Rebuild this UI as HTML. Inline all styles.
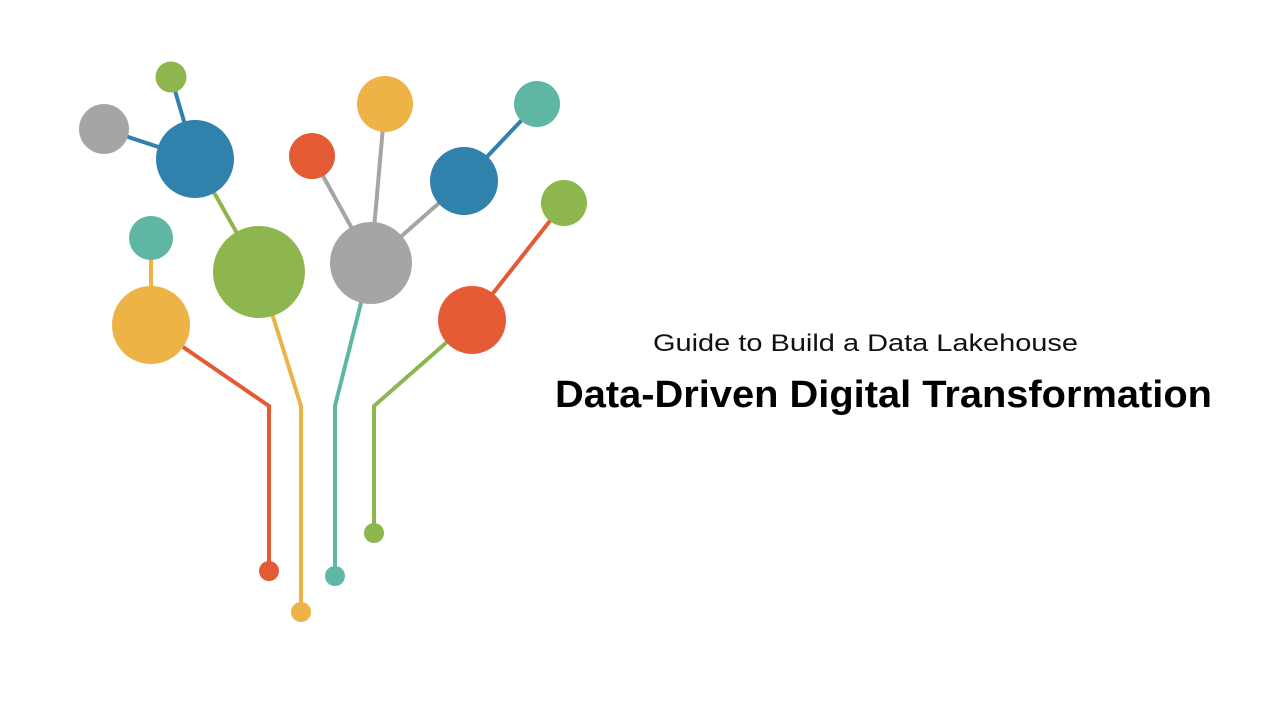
<!DOCTYPE html>
<html><head><meta charset="utf-8"><style>
html,body{margin:0;padding:0;background:#fff;}
svg{display:block;}
</style></head><body>
<svg width="1280" height="720" viewBox="0 0 1280 720" xmlns="http://www.w3.org/2000/svg">
<g fill="none" stroke-width="4" stroke-linejoin="miter">
<line x1="171" y1="77" x2="195" y2="159" stroke="#3181AD"/>
<line x1="104" y1="129" x2="195" y2="159" stroke="#3181AD"/>
<line x1="195" y1="159" x2="259" y2="272" stroke="#8DB74E"/>
<line x1="151" y1="238" x2="151" y2="325" stroke="#EDB347"/>
<polyline points="151,325 269,406 269,571" stroke="#E35A35"/>
<polyline points="259,272 301,406 301,612" stroke="#EDB347"/>
<line x1="312" y1="156" x2="371" y2="263" stroke="#A5A5A5"/>
<line x1="385" y1="104" x2="371" y2="263" stroke="#A5A5A5"/>
<line x1="464" y1="181" x2="371" y2="263" stroke="#A5A5A5"/>
<polyline points="371,263 335,406 335,576" stroke="#5FB7A3"/>
<line x1="464" y1="181" x2="537" y2="104" stroke="#3181AD"/>
<line x1="564" y1="203" x2="472" y2="320" stroke="#E35A35"/>
<polyline points="472,320 374,406 374,533" stroke="#8DB74E"/>
</g>
<circle cx="171" cy="77" r="15.5" fill="#8DB74E"/>
<circle cx="104" cy="129" r="25" fill="#A5A5A5"/>
<circle cx="195" cy="159" r="39" fill="#3181AD"/>
<circle cx="151" cy="238" r="22" fill="#5FB7A3"/>
<circle cx="151" cy="325" r="39" fill="#EDB347"/>
<circle cx="259" cy="272" r="46" fill="#8DB74E"/>
<circle cx="312" cy="156" r="23" fill="#E35A35"/>
<circle cx="385" cy="104" r="28" fill="#EDB347"/>
<circle cx="371" cy="263" r="41" fill="#A5A5A5"/>
<circle cx="464" cy="181" r="34" fill="#3181AD"/>
<circle cx="537" cy="104" r="23" fill="#5FB7A3"/>
<circle cx="564" cy="203" r="23" fill="#8DB74E"/>
<circle cx="472" cy="320" r="34" fill="#E35A35"/>
<circle cx="269" cy="571" r="10" fill="#E35A35"/>
<circle cx="301" cy="612" r="10" fill="#EDB347"/>
<circle cx="335" cy="576" r="10" fill="#5FB7A3"/>
<circle cx="374" cy="533" r="10" fill="#8DB74E"/>
<text x="653" y="351" font-family="Liberation Sans, sans-serif" font-size="24" fill="#111" textLength="425" lengthAdjust="spacingAndGlyphs">Guide to Build a Data Lakehouse</text>
<text x="555" y="407" font-family="Liberation Sans, sans-serif" font-size="38" font-weight="bold" fill="#000" textLength="657" lengthAdjust="spacingAndGlyphs">Data-Driven Digital Transformation</text>
</svg>
</body></html>
